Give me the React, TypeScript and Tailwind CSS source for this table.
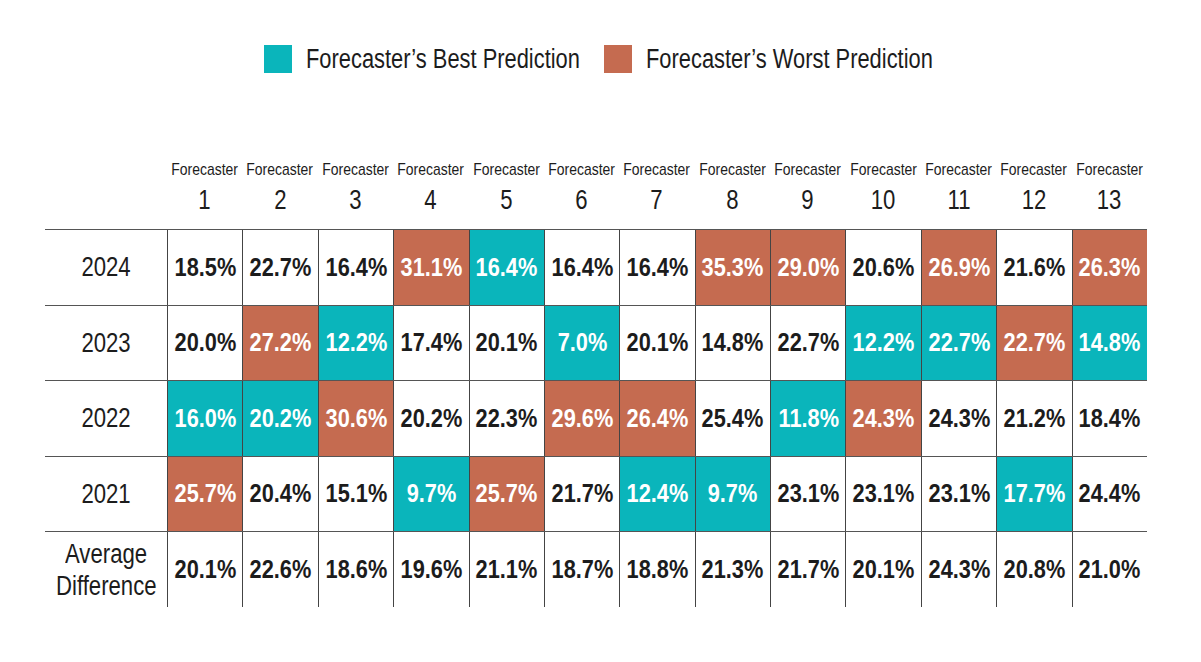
const font = { fontFamily: "'Liberation Sans', Arial, sans-serif" };

type Tone = "w" | "t" | "o";

const rows: { label: string[]; cells: [string, Tone][] }[] = [
  {
    label: ["2024"],
    cells: [
      ["18.5%", "w"], ["22.7%", "w"], ["16.4%", "w"], ["31.1%", "o"], ["16.4%", "t"], ["16.4%", "w"], ["16.4%", "w"],
      ["35.3%", "o"], ["29.0%", "o"], ["20.6%", "w"], ["26.9%", "o"], ["21.6%", "w"], ["26.3%", "o"],
    ],
  },
  {
    label: ["2023"],
    cells: [
      ["20.0%", "w"], ["27.2%", "o"], ["12.2%", "t"], ["17.4%", "w"], ["20.1%", "w"], ["7.0%", "t"], ["20.1%", "w"],
      ["14.8%", "w"], ["22.7%", "w"], ["12.2%", "t"], ["22.7%", "t"], ["22.7%", "o"], ["14.8%", "t"],
    ],
  },
  {
    label: ["2022"],
    cells: [
      ["16.0%", "t"], ["20.2%", "t"], ["30.6%", "o"], ["20.2%", "w"], ["22.3%", "w"], ["29.6%", "o"], ["26.4%", "o"],
      ["25.4%", "w"], ["11.8%", "t"], ["24.3%", "o"], ["24.3%", "w"], ["21.2%", "w"], ["18.4%", "w"],
    ],
  },
  {
    label: ["2021"],
    cells: [
      ["25.7%", "o"], ["20.4%", "w"], ["15.1%", "w"], ["9.7%", "t"], ["25.7%", "o"], ["21.7%", "w"], ["12.4%", "t"],
      ["9.7%", "t"], ["23.1%", "w"], ["23.1%", "w"], ["23.1%", "w"], ["17.7%", "t"], ["24.4%", "w"],
    ],
  },
  {
    label: ["Average", "Difference"],
    cells: [
      ["20.1%", "w"], ["22.6%", "w"], ["18.6%", "w"], ["19.6%", "w"], ["21.1%", "w"], ["18.7%", "w"], ["18.8%", "w"],
      ["21.3%", "w"], ["21.7%", "w"], ["20.1%", "w"], ["24.3%", "w"], ["20.8%", "w"], ["21.0%", "w"],
    ],
  },
];

const toneClass: Record<Tone, string> = {
  w: "bg-white text-[#1c1c1c]",
  t: "bg-[#0ab5bb] text-white",
  o: "bg-[#c56b50] text-white",
};

// the source font is a condensed face, so squeeze Liberation Sans horizontally
function Narrow({ children, className = "" }: { children: React.ReactNode; className?: string }) {
  return <span className={`inline-block whitespace-nowrap scale-x-[0.82] ${className}`}>{children}</span>;
}

export default function App() {
  return (
    <div className="w-[1201px] h-[662px] bg-white text-[#1c1c1c] pt-[45px]" style={font}>
      {/* legend */}
      <div className="flex items-center pl-[264px]">
        <div className="w-[28px] h-[28px] bg-[#0ab5bb]" />
        <div className="w-[272px] ml-[14px] text-[27px] leading-[26px]">
          <span className="inline-block whitespace-nowrap origin-left scale-x-[0.81]">Forecaster’s Best Prediction</span>
        </div>
        <div className="w-[28px] h-[28px] bg-[#c56b50] ml-[26px]" />
        <div className="w-[285px] ml-[14px] text-[27px] leading-[26px]">
          <span className="inline-block whitespace-nowrap origin-left scale-x-[0.81]">Forecaster’s Worst Prediction</span>
        </div>
      </div>

      <div className="ml-[45px] w-[1102px] mt-[87px]">
        {/* header */}
        <div className="grid grid-cols-[122px_repeat(13,minmax(0,1fr))] mb-[14px]">
          <div />
          {Array.from({ length: 13 }, (_, i) => (
            <div key={i} className="flex flex-col items-center">
              <Narrow className="text-[17px] leading-[20px]">Forecaster</Narrow>
              <Narrow className="text-[27px] leading-[30px] mt-[5px]">{i + 1}</Narrow>
            </div>
          ))}
        </div>

        {/* body */}
        {rows.map((row, r) => (
          <div
            key={r}
            className="grid grid-cols-[122px_repeat(13,minmax(0,1fr))] h-[75.6px] border-t border-[#555]"
          >
            <div className="flex flex-col items-center justify-center text-[27px] leading-[32px]">
              {row.label.map((l) => (
                <Narrow key={l}>{l}</Narrow>
              ))}
            </div>
            {row.cells.map(([v, t], c) => (
              <div
                key={c}
                className={`flex items-center justify-center border-l border-[#444] font-bold text-[25px] ${toneClass[t]}`}
              >
                <span className="inline-block whitespace-nowrap scale-x-[0.87]">{v}</span>
              </div>
            ))}
          </div>
        ))}
      </div>
    </div>
  );
}
